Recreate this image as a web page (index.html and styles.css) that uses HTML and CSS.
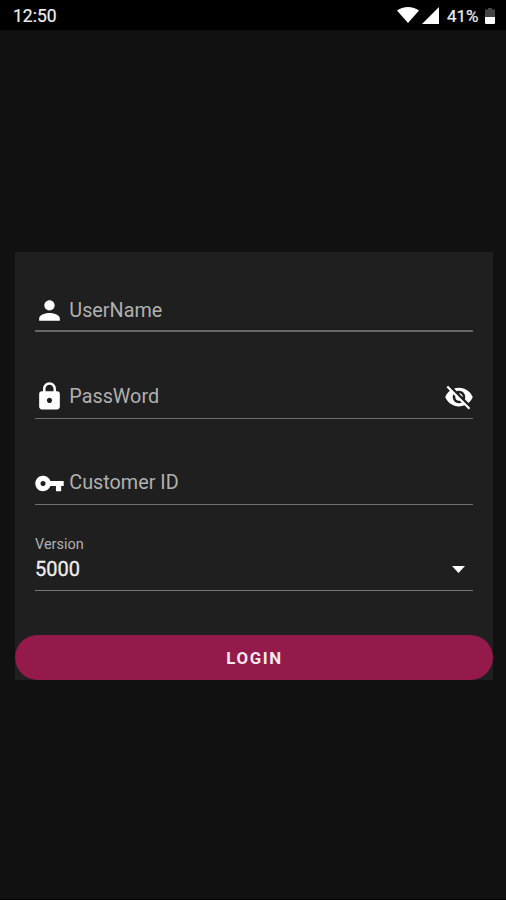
FILE: index.html
```html
<!DOCTYPE html>
<html lang="en">
<head>
<meta charset="utf-8">
<title>Login</title>
<link rel="stylesheet" href="styles.css">
</head>
<body>
<header class="status">
  <span class="clock">12:50</span>
  <svg class="wifi" viewBox="0 0 22 16"><path d="M0 3.600C6-1.200 16-1.200 22 3.600L11 16z"/></svg>
  <svg class="signal" viewBox="0 0 17 17"><path d="M17 0v17H0z"/></svg>
  <span class="percent">41%</span>
  <svg class="battery" viewBox="0 0 10 16"><path class="empty" d="M3 0h4v1.500h3V9H0V1.500h3z"/><path d="M0 9h10v6q0 1-1 1H1q-1 0-1-1z"/></svg>
</header>
<main>
  <form class="card">
    <div class="field">
      <svg class="icon" viewBox="0 0 24 24"><path d="M12 12c2.210 0 4-1.790 4-4s-1.790-4-4-4-4 1.790-4 4 1.790 4 4 4zm0 2c-2.670 0-8 1.340-8 4v2h16v-2c0-2.660-5.330-4-8-4z"/></svg>
      <span class="label">UserName</span>
    </div>
    <div class="field">
      <svg class="icon" viewBox="0 0 24 24"><path d="M18 8h-1V6c0-2.760-2.240-5-5-5S7 3.240 7 6v2H6c-1.100 0-2 .9-2 2v10c0 1.100.9 2 2 2h12c1.100 0 2-.9 2-2V10c0-1.100-.9-2-2-2zm-6 9c-1.100 0-2-.9-2-2s.9-2 2-2 2 .9 2 2-.9 2-2 2zm3.100-9H8.900V6c0-1.710 1.390-3.100 3.100-3.100s3.100 1.390 3.100 3.100v2z"/></svg>
      <span class="label">PassWord</span>
      <svg class="icon eye" viewBox="0 0 24 24"><path d="M12 7c2.760 0 5 2.240 5 5 0 .65-.13 1.260-.36 1.830l2.920 2.920c1.510-1.260 2.700-2.890 3.430-4.750-1.730-4.390-6-7.500-11-7.500-1.400 0-2.740.25-3.980.7l2.160 2.160C10.740 7.130 11.350 7 12 7zM2 4.270l2.280 2.280.46.46C3.080 8.300 1.780 10.020 1 12c1.730 4.390 6 7.500 11 7.500 1.550 0 3.030-.3 4.380-.84l.42.42L19.730 22 21 20.730 3.270 3 2 4.270zM7.530 9.800l1.550 1.550c-.05.21-.08.43-.08.65 0 1.660 1.340 3 3 3 .22 0 .44-.03.65-.08l1.550 1.550c-.67.33-1.410.53-2.200.53-2.760 0-5-2.240-5-5 0-.79.2-1.530.53-2.200zm4.310-.78l3.150 3.150.02-.16c0-1.660-1.340-3-3-3l-.17.01z"/></svg>
    </div>
    <div class="field">
      <svg class="icon" viewBox="0 0 24 24"><path d="M12.650 10C11.830 7.670 9.610 6 7 6c-3.310 0-6 2.690-6 6s2.690 6 6 6c2.610 0 4.830-1.670 5.650-4H17v4h4v-4h2v-4H12.650zM7 14c-1.100 0-2-.9-2-2s.9-2 2-2 2 .9 2 2-.9 2-2 2z"/></svg>
      <span class="label">Customer ID</span>
    </div>
    <div class="select">
      <span class="caption">Version</span>
      <div class="choice"><span>5000</span><svg class="arrow" viewBox="0 0 13 7"><path d="M0 0h13L6.500 7z"/></svg></div>
    </div>
    <button class="login" type="button">LOGIN</button>
  </form>
</main>
</body>
</html>
```
FILE: styles.css
```css
* { box-sizing: border-box; }
body {
  margin: 0;
  height: 900px;
  background: #111;
  border-bottom: 1px solid #000;
  font-family: Roboto, sans-serif;
  color: #eee;
}
svg { display: block; flex: none; fill: #fff; }
.status {
  height: 30px;
  padding: 2px 11px 0 13px;
  display: flex;
  align-items: center;
  background: #000;
  font-size: 17.5px;
  line-height: 28px;
  -webkit-text-stroke: 0.2px currentColor;
}
.clock { margin-right: auto; }
.wifi { width: 22px; height: 16px; margin: -2px 3px 0 0; }
.signal { width: 17px; height: 17px; margin: -2px 8px 0 0; }
.percent { width: 33px; font-size: 17px; margin-right: 5px; }
.battery { width: 10px; height: 16px; margin-top: -1px; }
.empty { fill: #444; }
main { padding: 222px 13px 0 15px; }
.card {
  display: flex;
  flex-direction: column;
  height: 428px;
  background: #1f1f1f;
}
.field {
  height: 86.5px;
  margin: 0 20px;
  padding-bottom: 6px;
  display: flex;
  align-items: flex-end;
  border-bottom: 1.500px solid #6f6f6f;
}
.field:first-child { height: 80px; padding-bottom: 4px; border-bottom-width: 2px; border-color: #666; }
.icon { width: 31px; height: 31px; margin: 0 0 -0.5px -0.7px; }
.field:first-child .icon { margin-bottom: 0.5px; }
.eye { width: 30px; height: 30px; margin: 0 -0.5px 0 auto; }
.label {
  margin-left: 4px;
  font-size: 19.8px;
  line-height: 31px;
  color: #b0b0b0;
}
.select {
  height: 86px;
  margin: 0 20px;
  padding-top: 31px;
  border-bottom: 1px solid #777;
}
.caption {
  display: block;
  font-size: 14.5px;
  line-height: 17px;
  color: #b0b0b0;
}
.choice {
  display: flex;
  align-items: center;
  justify-content: space-between;
  font-size: 20px;
  line-height: 33px;
  -webkit-text-stroke: 0.3px currentColor;
}
.arrow { width: 13px; height: 7px; margin-right: 8px; }
.login {
  height: 45px;
  margin: auto 0 0;
  padding: 2px 0 0;
  border: 0;
  border-radius: 23px;
  background: #931a4b;
  color: #f5e8ee;
  font: 700 16.8px/43px Roboto, sans-serif;
  letter-spacing: 1.600px;
  text-indent: 1px;
}
```
